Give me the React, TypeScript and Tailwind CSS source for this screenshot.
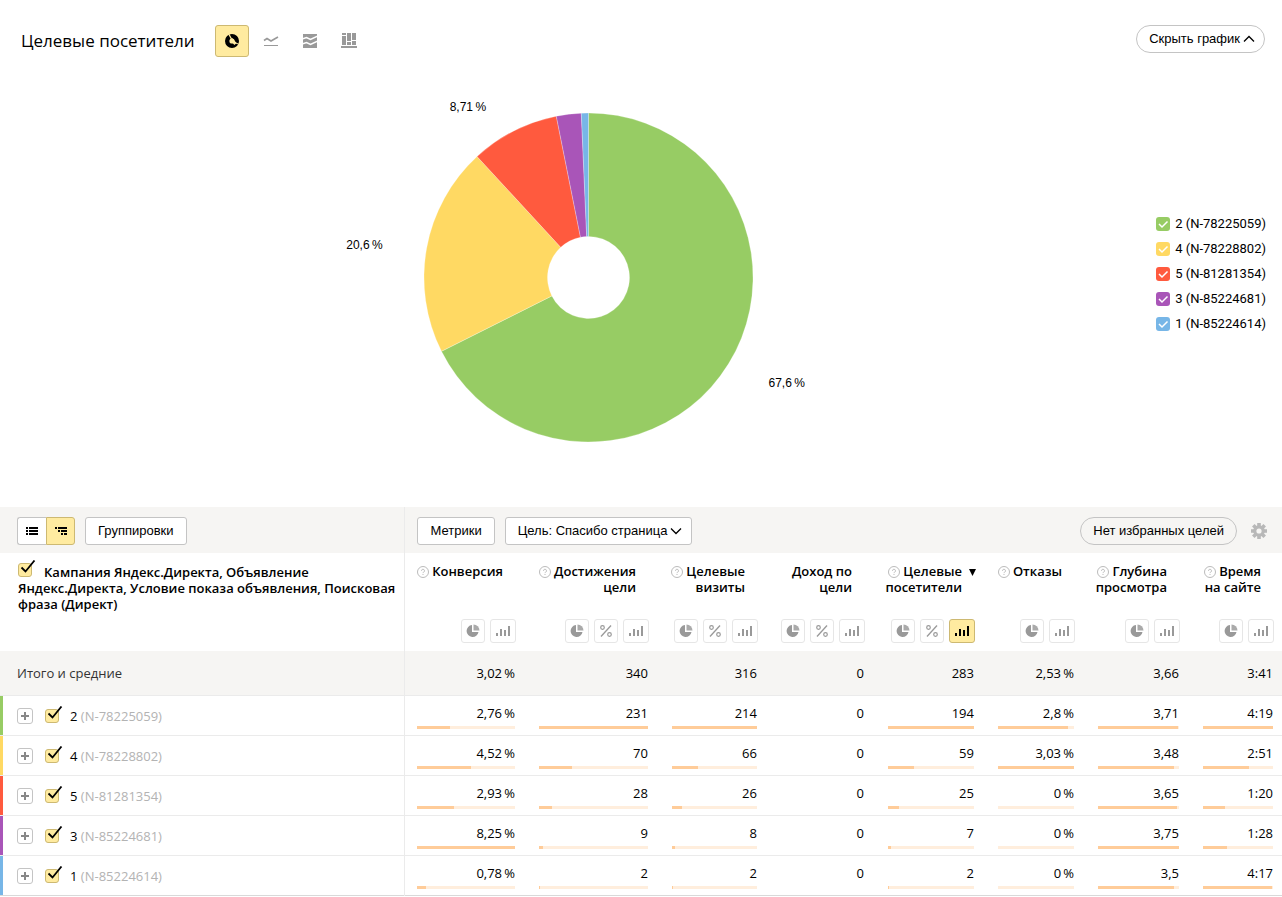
import React, { useState } from 'react';

interface Campaign {
    id: string;
    code: string;
    color: string;
    visitors: number;
    values: string[];
    bars: (number | null)[];
}

interface Column {
    lines: string[];
    help: boolean;
    percent: boolean;
    sorted?: boolean;
    total: string;
}

const CAMPAIGNS: Campaign[] = [
    { id: '2', code: 'N-78225059', color: '#97cc64', visitors: 194, values: ['2,76\u2009%', '231', '214', '0', '194', '2,8\u2009%', '3,71', '4:19'], bars: [33, 100, 100, null, 100, 92, 99, 100] },
    { id: '4', code: 'N-78228802', color: '#ffd963', visitors: 59, values: ['4,52\u2009%', '70', '66', '0', '59', '3,03\u2009%', '3,48', '2:51'], bars: [55, 30, 31, null, 30, 100, 94, 66] },
    { id: '5', code: 'N-81281354', color: '#ff5a3e', visitors: 25, values: ['2,93\u2009%', '28', '26', '0', '25', '0\u2009%', '3,65', '1:20'], bars: [37, 12, 12, null, 13, 0, 98, 31] },
    { id: '3', code: 'N-85224681', color: '#a955b8', visitors: 7, values: ['8,25\u2009%', '9', '8', '0', '7', '0\u2009%', '3,75', '1:28'], bars: [100, 4, 4, null, 4, 0, 100, 34] },
    { id: '1', code: 'N-85224614', color: '#77b6e7', visitors: 2, values: ['0,78\u2009%', '2', '2', '0', '2', '0\u2009%', '3,5', '4:17'], bars: [9, 1, 1, null, 1, 0, 94, 99] },
];

const COLUMNS: Column[] = [
    { lines: ['Конверсия'], help: true, percent: false, total: '3,02\u2009%' },
    { lines: ['Достижения', 'цели'], help: true, percent: true, total: '340' },
    { lines: ['Целевые', 'визиты'], help: true, percent: true, total: '316' },
    { lines: ['Доход по', 'цели'], help: false, percent: true, total: '0' },
    { lines: ['Целевые', 'посетители'], help: true, percent: true, sorted: true, total: '283' },
    { lines: ['Отказы'], help: true, percent: false, total: '2,53\u2009%' },
    { lines: ['Глубина', 'просмотра'], help: true, percent: false, total: '3,66' },
    { lines: ['Время', 'на сайте'], help: true, percent: false, total: '3:41' },
];

const BUTTON = 'h-7 border border-[#c4c4c4] font-["Liberation_Sans",Arial,sans-serif] text-[13px]';

/* Chart */

const polar = (radius: number, turn: number) => {
    const angle = turn * Math.PI * 2;
    return [radius * Math.sin(angle), -radius * Math.cos(angle)];
};

const slicePath = (from: number, to: number) => {
    const [x1, y1] = polar(164.5, from);
    const [x2, y2] = polar(164.5, to);
    const [x3, y3] = polar(41, to);
    const [x4, y4] = polar(41, from);
    const large = to - from > 0.5 ? 1 : 0;
    return `M${x1} ${y1}A164.5 164.5 0 ${large} 1 ${x2} ${y2}L${x3} ${y3}A41 41 0 ${large} 0 ${x4} ${y4}Z`;
};

const DonutChart = ({ items }: { items: Campaign[] }) => {
    const sum = items.reduce((acc, item) => acc + item.visitors, 0);
    let turn = 0;

    return (
        <svg viewBox="-250.5 -182.5 501 365" className="h-[365px] w-[501px]" role="img" aria-label="Целевые посетители">
            {items.map((item) => {
                const share = item.visitors / sum;
                const from = turn;
                turn += share;
                const [x, y] = polar(195, from + share / 2);
                const label = `${(share * 100).toPrecision(3).replace('.', ',')}\u2009%`;
                return (
                    <g key={item.id}>
                        <path d={slicePath(from, Math.min(turn, from + 0.9999))} fill={item.color} stroke="#fff" strokeOpacity="0.5" strokeWidth="0.5" />
                        {share > 0.05 && (
                            <text
                                x={x + (x > 0 ? 14 : -14)}
                                y={y + 7}
                                textAnchor={x > 0 ? 'start' : 'end'}
                                className='font-["Liberation_Sans",Arial,sans-serif] text-[12px]'
                            >
                                {label}
                            </text>
                        )}
                    </g>
                );
            })}
        </svg>
    );
};

/* Icons */

const DonutIcon = () => (
    <svg width="16" height="16" viewBox="0 0 16 16">
        <circle cx="8" cy="8" r="4.800" fill="none" stroke="currentColor" strokeWidth="4.400" />
        <path d="M4.500 0.500 8 7" stroke="#ffeba0" strokeWidth="1.300" />
        <path d="M7 6l4.500 5" stroke="#ffeba0" strokeWidth="3" />
        <path d="M10.500 9.500l5 2" stroke="#ffeba0" strokeWidth="1" />
    </svg>
);

const LinesIcon = () => (
    <svg width="16" height="16" viewBox="0 0 16 16" fill="none" stroke="currentColor">
        <path d="M1 7.500 4 5.500l4 2.500 7-4" strokeWidth="1.600" />
        <path d="M1 12.500h14" />
    </svg>
);

const AreasIcon = () => (
    <svg width="16" height="16" viewBox="0 0 16 16">
        <path d="M1 1h14v14H1z" fill="currentColor" />
        <path d="M0 6 4.500 4.500l4 2L16 3M0 11l4.500-1.500 4 2L16 8" fill="none" stroke="#fff" strokeWidth="1.500" />
    </svg>
);

const ColumnsIcon = () => (
    <svg width="16" height="16" viewBox="0 0 16 16" fill="currentColor">
        <path d="M1 0h4v2H1zM1 3h4v9H1zM6 0h4v8H6zM6 9h4v3H6zM11 0h4v7h-4zM11 8h4v4h-4zM0 13h16v2H0z" />
    </svg>
);

const PieIcon = () => (
    <svg width="14" height="14" viewBox="0 0 14 14" fill="#999">
        <path d="M6 1a6 6 0 1 0 6.500 7H6z" />
        <path d="M7.500 0.500a6 6 0 0 1 6 6h-6z" fill="#aaa" />
    </svg>
);

const PercentIcon = () => (
    <svg width="14" height="14" viewBox="0 0 14 14" fill="none" stroke="#999">
        <path d="M12 1.500 2 12.500" strokeWidth="1.300" />
        <circle cx="3.500" cy="3.500" r="1.800" strokeWidth="1.200" />
        <circle cx="10.500" cy="10.500" r="1.800" strokeWidth="1.200" />
    </svg>
);

const BarsIcon = () => (
    <svg width="14" height="12" viewBox="0 0 14 12" fill="currentColor">
        <path d="M0 8h2v3H0zM4 4h2v7H4zM8 5h2v6H8zM12 1h2v10h-2z" />
    </svg>
);

const ListIcon = () => (
    <svg width="12" height="10" viewBox="0 0 12 10" fill="currentColor">
        <path d="M0 1h2v2H0zM3 1h9v2H3zM0 4h2v2H0zM3 4h9v2H3zM0 7h2v2H0zM3 7h9v2H3z" />
    </svg>
);

const TreeIcon = () => (
    <svg width="12" height="10" viewBox="0 0 12 10" fill="currentColor">
        <path d="M0 1h2v2H0zM3 1h9v2H3zM3 4h2v2H3zM6 4h6v2H6zM6 7h2v2H6zM9 7h3v2H9z" />
    </svg>
);

const Chevron = ({ up = false }: { up?: boolean }) => (
    <svg width="12" height="12" viewBox="0 0 12 12" fill="none" stroke="#000" strokeWidth="1.300">
        <path d={up ? 'M1 8.500 6 3.500l5 5' : 'M1 3.500l5 5 5-5'} />
    </svg>
);

const GearIcon = () => (
    <svg width="16" height="16" viewBox="0 0 16 16">
        <g stroke="#b8b8b8" strokeWidth="3.600">
            <path d="M8 0v16M0 8h16M2.300 2.300l11.400 11.400M13.700 2.300 2.300 13.700" />
        </g>
        <circle cx="8" cy="8" r="5.800" fill="#b8b8b8" />
        <circle cx="8" cy="8" r="2.600" fill="#f6f5f3" />
    </svg>
);

const HelpIcon = () => (
    <svg width="12" height="12" viewBox="0 0 12 12" fill="none" stroke="#b3b3b3" className="mr-[3px] inline-block align-[-2px]">
        <circle cx="6" cy="6" r="5.500" strokeWidth="0.900" />
        <path d="M4.500 4.800a1.500 1.500 0 1 1 2.200 1.300c-.5.300-.7.500-.7 1M6 8v1" strokeWidth="0.900" />
    </svg>
);

interface TickProps {
    label: string;
    checked: boolean;
    onChange: () => void;
}

const Tick: React.FC<TickProps> = ({ label, checked, onChange }) => (
    <span className="relative inline-block size-[14px] shrink-0">
        <input
            type="checkbox"
            aria-label={label}
            checked={checked}
            onChange={onChange}
            className="block size-[14px] appearance-none rounded-[3px] border border-[#c9c9c9] bg-white checked:border-[#cdb972] checked:bg-[#ffeba0]"
        />
        {checked && (
            <svg width="16" height="14" viewBox="0 0 16 14" fill="none" stroke="#000" className="pointer-events-none absolute -top-[3px] left-[2px]">
                <path d="M1.500 7.500 5.500 11.500 14.500 0.500" strokeWidth="1.800" />
            </svg>
        )}
    </span>
);

const SMALL = 'flex h-6 items-center justify-center rounded-[3px] border';

const ColumnModes = ({ percent, active }: { percent: boolean; active?: boolean }) => (
    <div className="flex justify-end gap-[5px]">
        <button aria-label="Круговая диаграмма" className={`${SMALL} w-6 border-[#e6e6e6]`}>
            <PieIcon />
        </button>
        {percent && (
            <button aria-label="Проценты" className={`${SMALL} w-6 border-[#e6e6e6]`}>
                <PercentIcon />
            </button>
        )}
        <button
            aria-label="Столбцы"
            className={`${SMALL} w-[26px] ${active ? 'border-[#cdb972] bg-[#ffeba0] text-black' : 'border-[#e6e6e6] text-[#999]'}`}
        >
            <BarsIcon />
        </button>
    </div>
);

const CHART_TYPES = [
    { name: 'Круговая диаграмма', Icon: DonutIcon },
    { name: 'Линии', Icon: LinesIcon },
    { name: 'Области', Icon: AreasIcon },
    { name: 'Колонки', Icon: ColumnsIcon },
];

export default function App() {
    const [selected, setSelected] = useState<string[]>(CAMPAIGNS.map((c) => c.id));
    const [chartOpen, setChartOpen] = useState(true);

    const toggle = (id: string) => {
        setSelected((prev) => (prev.includes(id) ? prev.filter((x) => x !== id) : [...prev, id]));
    };

    const allSelected = selected.length === CAMPAIGNS.length;
    const toggleAll = () => setSelected(allSelected ? [] : CAMPAIGNS.map((c) => c.id));

    return (
        <main className='bg-white font-["Open_Sans","Noto_Sans",sans-serif] text-[13px] leading-4 text-black'>
            {/* Chart header */}
            <header className="flex items-start justify-between pt-[25px] pr-[17px] pl-[21px]">
                <div className="flex items-center gap-5">
                    <h1 className="text-[17px] leading-8">Целевые посетители</h1>
                    <div className="flex gap-[5px]">
                        {CHART_TYPES.map(({ name, Icon }, i) => (
                            <button
                                key={name}
                                aria-label={name}
                                className={`flex h-8 w-[34px] items-center justify-center rounded-[3px] border ${i === 0
                                    ? 'border-[#cdb972] bg-[#ffeba0] text-black'
                                    : 'border-transparent text-[#999]'
                                    }`}
                            >
                                <Icon />
                            </button>
                        ))}
                    </div>
                </div>
                <button onClick={() => setChartOpen(!chartOpen)} className={`${BUTTON} flex items-center gap-[3px] rounded-full pr-[9px] pl-3`}>
                    {chartOpen ? 'Скрыть график' : 'Показать график'}
                    <Chevron up={chartOpen} />
                </button>
            </header>

            {/* Chart and legend */}
            {chartOpen && (
                <section className="flex pt-[38px] pr-4 pb-[47px] pl-5">
                    <div className="flex flex-1 justify-center">
                        <DonutChart items={CAMPAIGNS.filter((c) => selected.includes(c.id))} />
                    </div>
                    <ul className="flex shrink-0 flex-col gap-[9px] pt-[121px]">
                        {CAMPAIGNS.map((c) => (
                            <li key={c.id}>
                                <label className='flex items-center gap-[5px] font-["Roboto",sans-serif] text-[13px]'>
                                    <span className="relative size-[14px]">
                                        <input
                                            type="checkbox"
                                            checked={selected.includes(c.id)}
                                            onChange={() => toggle(c.id)}
                                            className="block size-[14px] appearance-none rounded-[3px]"
                                            style={{ backgroundColor: c.color }}
                                        />
                                        {selected.includes(c.id) && (
                                            <svg width="14" height="14" viewBox="0 0 14 14" fill="none" stroke="#fff" className="pointer-events-none absolute inset-0">
                                                <path d="M3 7l3 3 5.500-5.500" strokeWidth="1.500" />
                                            </svg>
                                        )}
                                    </span>
                                    {c.id} ({c.code})
                                </label>
                            </li>
                        ))}
                    </ul>
                </section>
            )}

            {/* Report */}
            <table className="w-full min-w-[1200px] table-fixed border-collapse">
                <colgroup>
                    <col />
                    <col className="w-[122px]" />
                    <col className="w-[133px]" />
                    <col className="w-[109px]" />
                    <col className="w-[107px]" />
                    <col className="w-[110px]" />
                    <col className="w-[100px]" />
                    <col className="w-[105px]" />
                    <col className="w-[91px]" />
                </colgroup>
                <thead>
                    <tr className="h-[46px] bg-[#f6f5f3]">
                        <td className="border-r border-[#ebebeb] pt-[2px] pl-[17px]">
                            <div className="flex gap-[10px]">
                                <div className="flex">
                                    <button aria-label="Список" className="flex h-7 w-[29px] items-center justify-center rounded-l-[3px] border border-r-0 border-[#c4c4c4] bg-white">
                                        <ListIcon />
                                    </button>
                                    <button aria-label="Дерево" className="flex h-7 w-[29px] items-center justify-center rounded-r-[3px] border border-[#cdb972] bg-[#ffeba0]">
                                        <TreeIcon />
                                    </button>
                                </div>
                                <button className={`${BUTTON} rounded-[3px] bg-white px-3`}>Группировки</button>
                            </div>
                        </td>
                        <td colSpan={8} className="pt-[2px] pr-[15px] pl-3">
                            <div className="flex items-center gap-[10px]">
                                <button className={`${BUTTON} rounded-[3px] bg-white px-3`}>Метрики</button>
                                <div className="relative mr-auto">
                                    <select aria-label="Цель" className={`${BUTTON} w-[187px] appearance-none rounded-[3px] bg-white px-3`}>
                                        <option>Цель: Спасибо страница</option>
                                    </select>
                                    <span className="pointer-events-none absolute top-2 right-[10px]">
                                        <Chevron />
                                    </span>
                                </div>
                                <button className={`${BUTTON} rounded-full px-3`}>Нет избранных целей</button>
                                <button aria-label="Настройки" className="ml-1">
                                    <GearIcon />
                                </button>
                            </div>
                        </td>
                    </tr>
                    <tr className="h-[98px] align-top">
                        <th scope="col" className="border-r border-[#ebebeb] pt-[10px] pr-1 pl-[18px] text-left font-semibold">
                            <span className="mr-3">
                                <Tick label="Выбрать все" checked={allSelected} onChange={toggleAll} />
                            </span>
                            Кампания Яндекс.Директа, Объявление Яндекс.Директа, Условие показа объявления, Поисковая фраза (Директ)
                        </th>
                        {COLUMNS.map((col, i) => (
                            <th key={i} scope="col" className="pt-[10px] pr-[11px] text-right font-semibold whitespace-nowrap last:pr-2">
                                <div className="relative h-14 pr-[13px]">
                                    {col.help && <HelpIcon />}
                                    {col.lines.map((line) => (
                                        <React.Fragment key={line}>
                                            {line}
                                            <br />
                                        </React.Fragment>
                                    ))}
                                    {col.sorted && (
                                        <svg width="7" height="7" viewBox="0 0 7 7" className="absolute top-[6px] -right-px">
                                            <path d="M0 0h7L3.500 7z" />
                                        </svg>
                                    )}
                                </div>
                                <ColumnModes percent={col.percent} active={col.sorted} />
                            </th>
                        ))}
                    </tr>
                </thead>
                <tbody>
                    <tr className="h-11 border-b border-[#ebebeb] bg-[#f6f5f3]">
                        <th scope="row" className="border-r border-[#ebebeb] pl-[17px] text-left font-normal text-[#333]">Итого и средние</th>
                        {COLUMNS.map((col, i) => (
                            <td key={i} className="pr-3 text-right last:pr-[9px]">{col.total}</td>
                        ))}
                    </tr>
                    {CAMPAIGNS.map((c) => (
                        <tr key={c.id} className="h-10 border-b border-[#ebebeb] last:border-[#d9d9d9]">
                            <th scope="row" className="border-r border-[#ebebeb] p-0 text-left font-normal">
                                <div className="flex h-[39px]">
                                    <span className="w-[3px]" style={{ backgroundColor: c.color }} />
                                    <div className="flex items-center pt-[2px] pl-[14px]">
                                        <button aria-label={`Раскрыть ${c.id}`} className="mr-3 flex size-4 items-center justify-center rounded-[3px] border border-[#c4c4c4]">
                                            <svg width="8" height="8" viewBox="0 0 8 8" stroke="#888" strokeWidth="2">
                                                <path d="M0 4h8M4 0v8" />
                                            </svg>
                                        </button>
                                        <Tick label={`${c.id} (${c.code})`} checked={selected.includes(c.id)} onChange={() => toggle(c.id)} />
                                        <span className="ml-[11px]">
                                            {c.id} <span className="text-[#b3b3b3]">({c.code})</span>
                                        </span>
                                    </div>
                                </div>
                            </th>
                            {c.values.map((value, i) => (
                                <td key={i} className="pt-[9px] pr-3 pb-[6px] pl-3 text-right last:pr-[9px]">
                                    {value}
                                    <div className={`mt-[5px] h-[3px] ${c.bars[i] === null ? '' : 'bg-[#ffeedd]'}`}>
                                        <div className="h-full bg-[#ffcc99]" style={{ width: `${c.bars[i] ?? 0}%` }} />
                                    </div>
                                </td>
                            ))}
                        </tr>
                    ))}
                </tbody>
            </table>
        </main>
    );
}
